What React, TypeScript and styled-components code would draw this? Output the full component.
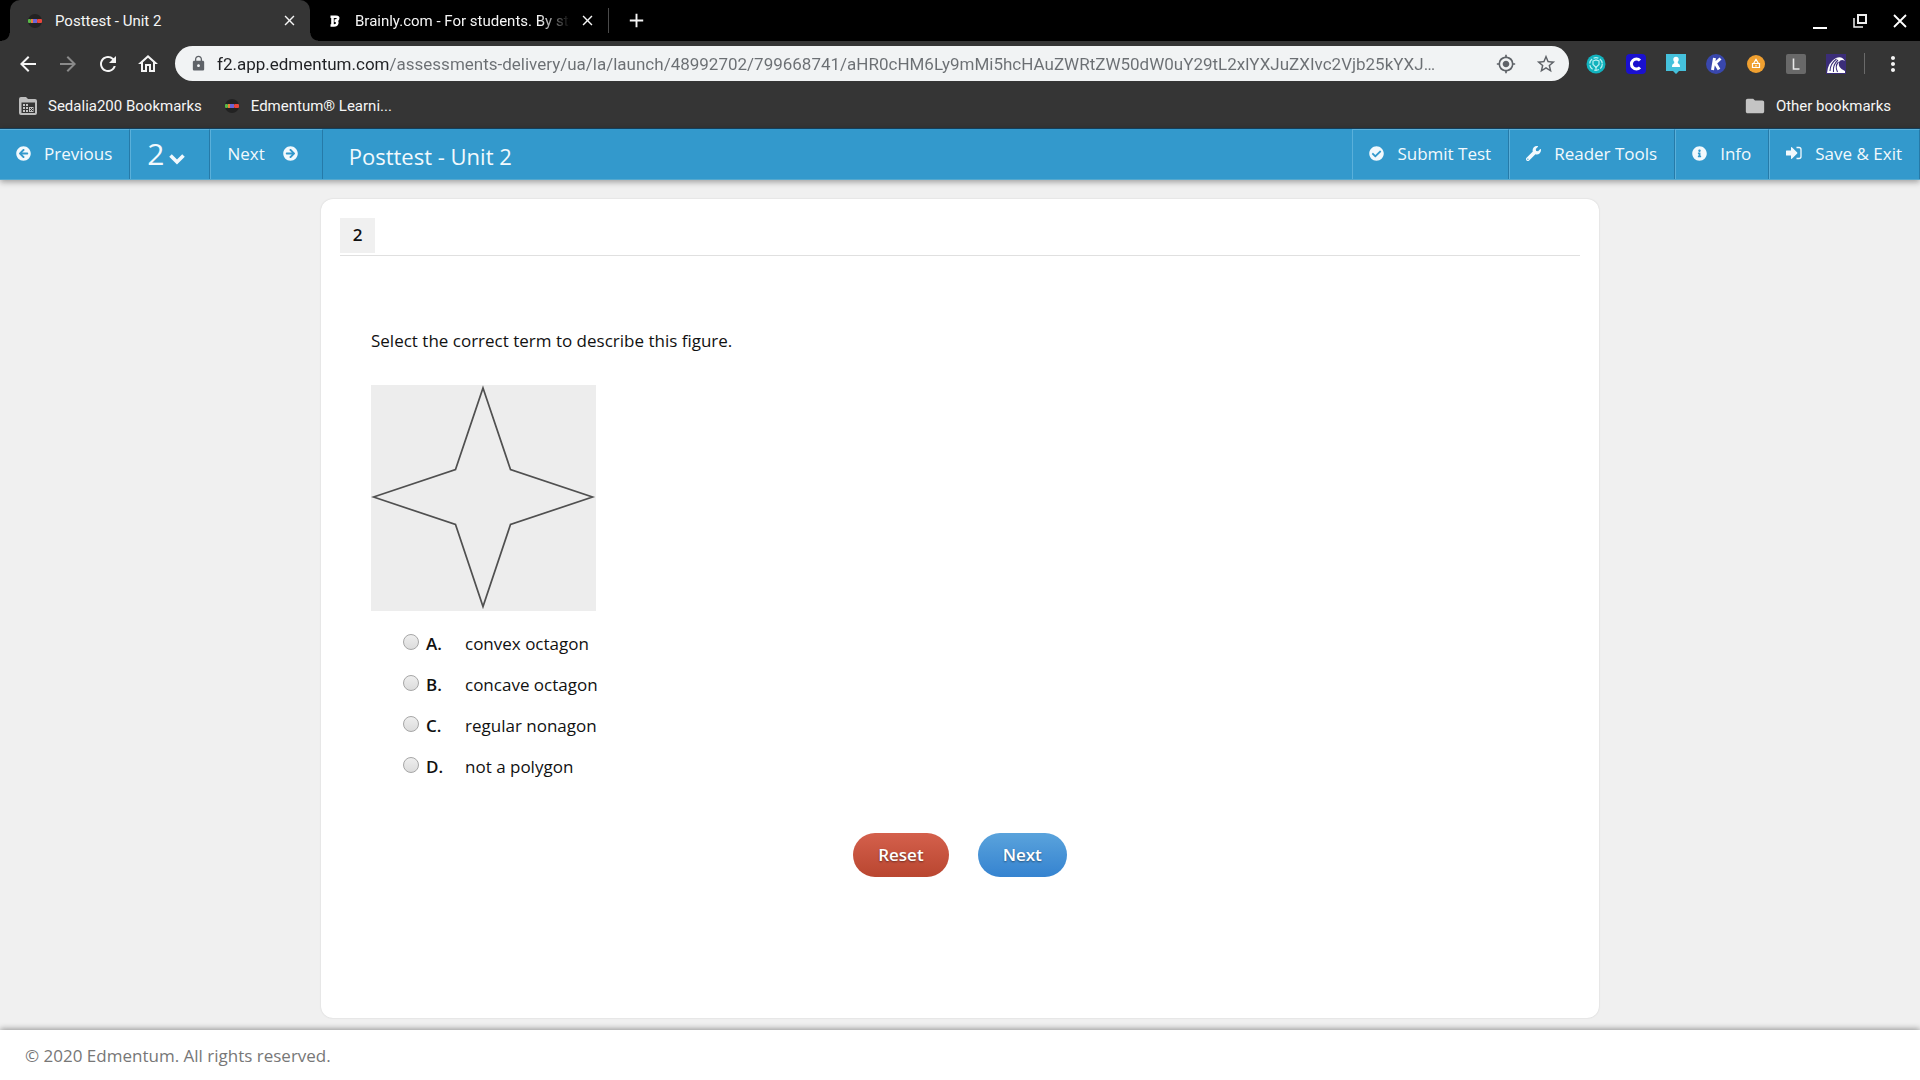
import React, { useState } from "react";
import styled, { createGlobalStyle, css } from "styled-components";
import {
  MdAdd,
  MdArrowBack,
  MdArrowForward,
  MdClose,
  MdFolder,
  MdLock,
  MdMoreVert,
  MdMyLocation,
  MdOutlineHome,
  MdRefresh,
  MdStarBorder,
} from "react-icons/md";
import {
  FaArrowCircleLeft,
  FaArrowCircleRight,
  FaCheckCircle,
  FaInfoCircle,
  FaWrench,
} from "react-icons/fa";

const GlobalStyle = createGlobalStyle`
  *, *::before, *::after { box-sizing: border-box; }
  body {
    margin: 0;
    background: #f0f0f0;
    font-family: "Open Sans", "Noto Sans", sans-serif;
    font-size: 17px;
    color: #111;
  }
  button, input { font: inherit; color: inherit; }
  svg { display: block; flex: none; }
`;

const Screen = styled.div`
  display: flex;
  flex-direction: column;
  min-height: 100vh;
`;

/* ---------- browser window ---------- */

const Chrome = styled.header`
  background: #353535;
  color: #f5f5f5;
  font-family: Roboto, "Liberation Sans", sans-serif;
  font-size: 15px;
`;

const TabStrip = styled.div`
  display: flex;
  height: 41px;
  padding-left: 10px;
  background: #000;
`;

const flare = css`
  content: "";
  position: absolute;
  bottom: 0;
  width: 8px;
  height: 8px;
`;

const Tab = styled.div<{ $active?: boolean }>`
  position: relative;
  display: flex;
  align-items: center;
  width: ${(p) => (p.$active ? 300 : 298)}px;
  padding: 0 12px 0 16px;
  border-radius: 10px 10px 0 0;
  background: ${(p) => (p.$active ? "#353535" : "transparent")};
  ${(p) =>
    p.$active &&
    css`
      &::before {
        ${flare}
        left: -8px;
        background: radial-gradient(circle at 0 0, #000 7px, #353535 8px);
      }
      &::after {
        ${flare}
        right: -8px;
        background: radial-gradient(circle at 100% 0, #000 7px, #353535 8px);
      }
    `}
`;

const TabTitle = styled.span<{ $fade?: boolean }>`
  flex: 1;
  min-width: 0;
  margin-left: 11px;
  overflow: hidden;
  white-space: nowrap;
  ${(p) => p.$fade && "mask-image: linear-gradient(90deg, #000 calc(100% - 30px), transparent);"}
`;

const TabClose = styled.button`
  display: grid;
  place-items: center;
  width: 18px;
  height: 18px;
  margin-left: 8px;
  padding: 0;
  border: 0;
  background: none;
`;

const TabDivider = styled.span`
  align-self: center;
  width: 1px;
  height: 25px;
  background: #4a4a4a;
`;

const IconButton = styled.button<{ $dim?: boolean }>`
  display: grid;
  place-items: center;
  width: 40px;
  height: 35px;
  padding: 0;
  border: 0;
  background: none;
  color: ${(p) => (p.$dim ? "#8a8a8a" : "inherit")};
`;

const NewTab = styled(IconButton)`
  height: 41px;
  margin-left: 7px;
`;

const WindowControls = styled.div`
  display: flex;
  align-items: center;
  margin-left: auto;
`;

const Toolbar = styled.div`
  display: flex;
  align-items: center;
  padding: 5px 7px 5px 8px;
`;

const Omnibox = styled.label`
  display: flex;
  flex: 1;
  align-items: center;
  min-width: 0;
  height: 35px;
  margin: 0 7px;
  padding: 0 3px 0 15px;
  border-radius: 18px;
  background: #f1f3f4;
  color: #5f6368;
`;

const Address = styled.input`
  flex: 1;
  min-width: 0;
  height: 35px;
  margin-left: 10px;
  padding: 0;
  border: 0;
  outline: 0;
  font-size: 17px;
  color: #5f6368;
  background: linear-gradient(90deg, #202124 173px, #6b6f73 173px);
  background-clip: text;
  -webkit-text-fill-color: transparent;
`;

const ToolbarDivider = styled.span`
  width: 1px;
  height: 21px;
  margin: 0 8px;
  background: #6a6a6a;
`;

const Bookmarks = styled.nav`
  display: flex;
  align-items: center;
  height: 42px;
  padding: 0 29px 2px 18px;
`;

const Bookmark = styled.a<{ $end?: boolean }>`
  display: flex;
  align-items: center;
  gap: 10px;
  margin-left: ${(p) => (p.$end ? "auto" : 0)};
  margin-right: ${(p) => (p.$end ? 0 : "21px")};
  color: inherit;
  text-decoration: none;
`;

/* ---------- assessment page ---------- */

const TopBar = styled.div`
  display: flex;
  height: 52px;
  border-top: 1px solid #123f5c;
  border-bottom: 1px solid #55a9cf;
  background: #3399cc;
  box-shadow: 0 2px 6px rgba(0, 0, 0, 0.35);
  color: #f2f9fd;
`;

const BarButton = styled.button`
  display: flex;
  align-items: center;
  gap: 13px;
  padding: 0 17px 3px 16px;
  border: 0;
  border-top: 1px solid #5ab0da;
  border-left: 1px solid #5ab0da;
  border-right: 1px solid #267aa8;
  background: none;
  white-space: nowrap;

  &:first-child {
    border-left: 0;
  }
`;

const NextBarButton = styled(BarButton)`
  gap: 18px;
  padding-right: 24px;
`;

const QuestionPicker = styled(BarButton)`
  gap: 5px;
  padding-right: 24px;
  font-size: 30px;

  svg {
    margin-top: 12px;
  }
`;

const BarTitle = styled.h1`
  flex: 1;
  margin: 0 26px;
  padding-top: 2px;
  font-size: 22px;
  font-weight: 400;
  line-height: 50px;
`;

const Card = styled.main`
  flex: 1;
  width: calc(100% - 40px);
  max-width: 1278px;
  margin: 19px auto 12px;
  padding: 19px;
  border-radius: 12px;
  background: #fff;
  box-shadow: 0 0 2px rgba(0, 0, 0, 0.14);
`;

const CardHeader = styled.div`
  padding-bottom: 2px;
  border-bottom: 1px solid #e0e0e0;
`;

const NumberBadge = styled.h2`
  width: 35px;
  margin: 0;
  padding-bottom: 2px;
  background: #f0f0f0;
  font-size: 17px;
  font-weight: 600;
  line-height: 33px;
  text-align: center;
`;

const Question = styled.fieldset`
  margin: 0;
  padding: 73px 31px 0;
  border: 0;
  line-height: 24px;
`;

const Prompt = styled.legend`
  float: left;
  width: 100%;
  padding: 0;
`;

const Figure = styled.svg`
  clear: both;
  padding-top: 32px;
  box-sizing: content-box;
`;

const Options = styled.div`
  padding: 12px 0 0 32px;
`;

const Option = styled.label`
  display: flex;
  align-items: center;
  width: max-content;
  height: 41px;
`;

const Radio = styled.input`
  appearance: none;
  width: 16px;
  height: 16px;
  margin: 0 7px 3px 0;
  border: 1px solid #a6a6a6;
  border-radius: 50%;
  background: linear-gradient(#eee, #dcdcdc);

  &:checked {
    background: radial-gradient(circle, #444 3px, #e6e6e6 4px);
  }
`;

const Letter = styled.span`
  width: 39px;
  font-weight: 600;
`;

const Actions = styled.div`
  display: flex;
  justify-content: center;
  gap: 29px;
  margin-top: 46px;
`;

const Pill = styled.button<{ $tone: "red" | "blue" }>`
  height: 44px;
  padding: 0 25px 2px;
  border: 0;
  border-radius: 22px;
  background: ${(p) =>
    p.$tone === "red" ? "linear-gradient(#d4604c, #b94630)" : "linear-gradient(#5aa3dc, #3583d0)"};
  color: #fff;
  font-weight: 600;
  text-shadow: 0 1px 2px rgba(0, 0, 0, 0.45);
`;

const Footer = styled.footer`
  padding: 14px 25px 12px;
  background: #fff;
  box-shadow: 0 -1px 6px rgba(0, 0, 0, 0.4);
  color: #777;
  line-height: 24px;
`;

/* ---------- drawings ---------- */

const EdmentumMark = () => (
  <svg width="18" height="18" viewBox="0 0 18 18">
    <circle cx="9" cy="9" r="7" fill="#222" />
    <rect x="2" y="7" width="3" height="4" rx="1" fill="#58b947" />
    <rect x="5" y="7" width="3" height="4" fill="#e8803a" />
    <rect x="7" y="7" width="4" height="4" fill="#6a63d8" />
    <rect x="11" y="7" width="5" height="4" rx="1" fill="#e8453c" />
  </svg>
);

const BrainlyMark = () => (
  <svg width="18" height="18" viewBox="0 0 18 18" fill="none" stroke="#fff" strokeWidth="2.6">
    <path d="M6.5 4v9.5M4.5 4.8h5.500q3 0 2 2.200-.6 1.700-3.500 1.700 3.500.2 2.700 2.800-.5 2-3.200 2H4.500" />
  </svg>
);

const ManagedFolder = () => (
  <svg width="20" height="18" viewBox="0 0 20 18">
    <path d="M3 0h5l2 2h7q2 0 2 2v12q0 2-2 2H3q-2 0-2-2V2q0-2 2-2z" fill="#bdbdbd" />
    <path d="M3.500 5.500h13.500v10.500H3.500z" fill="#353535" />
    <path d="M5 7h5v8H5zM11 10h4.500v5H11z" fill="#c4c4c4" />
    <path d="M7.500 7v8M5 9.500h5M5 12.500h5M12 11l3 3M15 11l-3 3" stroke="#353535" />
  </svg>
);

const ChevronIcon = () => (
  <svg width="16" height="12" viewBox="0 0 16 12" fill="none" stroke="currentColor" strokeWidth="3.600">
    <path d="M1.500 2.500L8 9L14.500 2.500" />
  </svg>
);

const MinimizeIcon = () => (
  <svg width="16" height="16" viewBox="0 0 16 16" stroke="#fff" strokeWidth="2">
    <path d="M1 15h14" />
  </svg>
);

const RestoreIcon = () => (
  <svg width="16" height="16" viewBox="0 0 16 16" fill="none" stroke="#eee">
    <path d="M6 2h8v8H6z" strokeWidth="2" />
    <path d="M2 5v9h9" strokeWidth="1.500" />
  </svg>
);

const CloseWindowIcon = () => (
  <svg width="16" height="16" viewBox="0 0 16 16" stroke="#fff" strokeWidth="1.800">
    <path d="M2 2l12 12M14 2L2 14" />
  </svg>
);

const SignInIcon = () => (
  <svg width="16" height="16" viewBox="0 0 16 16">
    <path d="M0.500 5.500h4.500V2.500q.1-.8.900-.3l5.300 5.200q.4.500 0 1L5.900 13.700q-.8.500-.9-.3v-3H.5q-.5 0-.5-.5V6q0-.5.500-.5z" fill="currentColor" />
    <path d="M10.500 2.500h2.500q2 0 2 2v7q0 2-2 2h-2.500" fill="none" stroke="currentColor" strokeWidth="1.300" />
  </svg>
);

const extensions: { name: string; art: React.ReactNode }[] = [
  {
    name: "Shield",
    art: (
      <>
        <circle cx="11" cy="11" r="9.500" fill="#12b3be" />
        <g fill="none" stroke="#b9f0f2" strokeWidth="1.200">
          <circle cx="11" cy="11" r="6.300" strokeDasharray="5 1.600" />
          <path d="M8 8l3-1 3 1v3.500l-3 3-3-3z" />
          <path d="M11 14v3" />
        </g>
      </>
    ),
  },
  {
    name: "Clever",
    art: (
      <>
        <rect x="1" y="1" width="20" height="20" rx="4" fill="#1a10cf" />
        <path d="M15 7.500a5 5 0 1 0 0 7" fill="none" stroke="#fff" strokeWidth="3" />
      </>
    ),
  },
  {
    name: "Classroom",
    art: (
      <>
        <path d="M1 1h20v17h-7l-3 3-3-3H1z" fill="#45c1dc" />
        <circle cx="11" cy="6.500" r="2.700" fill="#fff" />
        <path d="M9.500 8h3l.5 2.500q2 .3 2 3.500H7q0-3.200 2-3.500z" fill="#fff" />
      </>
    ),
  },
  {
    name: "Kami",
    art: (
      <>
        <circle cx="11" cy="11" r="10" fill="#3947ad" />
        <path d="M9.500 5L7.500 17M15.500 5.500L9 11.500M10.500 10.500l3.500 6" fill="none" stroke="#fff" strokeWidth="3" />
      </>
    ),
  },
  {
    name: "Lock",
    art: (
      <>
        <circle cx="11" cy="11" r="9" fill="#f0a030" />
        <path d="M7.500 10.500h7v4h-7zM8.500 10.500l2.500-4 2.500 4M11 12v1.500" fill="none" stroke="#fff" strokeWidth="1.200" />
      </>
    ),
  },
  {
    name: "Lightspeed",
    art: (
      <>
        <rect x="1" y="1" width="20" height="20" rx="2" fill="#696969" />
        <path d="M8.500 5.500v10.500h6" fill="none" stroke="#e8e8e8" strokeWidth="1.600" />
      </>
    ),
  },
  {
    name: "Wave",
    art: (
      <>
        <rect x="1" y="1" width="20" height="20" fill="#3b2d78" />
        <path d="M2 20Q3 9 11 5q6-2.500 9 3-4-2.500-6 1-1.500 6 6 9v2z" fill="#fff" />
        <path d="M5 18Q5 11 11.500 6M8.500 19Q7.500 12 13 7M12.500 19q-3-6 1-10" fill="none" stroke="#3b2d78" strokeWidth="1.100" />
      </>
    ),
  },
];

const answers = [
  ["A.", "convex octagon"],
  ["B.", "concave octagon"],
  ["C.", "regular nonagon"],
  ["D.", "not a polygon"],
];

const url =
  "f2.app.edmentum.com/assessments-delivery/ua/la/launch/48992702/799668741/aHR0cHM6Ly9mMi5hcHAuZWRtZW50dW0uY29tL2xlYXJuZXIvc2Vjb25kYXJ…";

export default function App() {
  const [choice, setChoice] = useState<string | null>(null);

  return (
    <Screen>
      <GlobalStyle />
      <Chrome>
        <TabStrip>
          <Tab $active>
            <EdmentumMark />
            <TabTitle>Posttest - Unit 2</TabTitle>
            <TabClose aria-label="Close tab">
              <MdClose size={17} />
            </TabClose>
          </Tab>
          <Tab>
            <BrainlyMark />
            <TabTitle $fade>Brainly.com - For students. By stu</TabTitle>
            <TabClose aria-label="Close tab">
              <MdClose size={17} />
            </TabClose>
          </Tab>
          <TabDivider />
          <NewTab aria-label="New tab">
            <MdAdd size={23} />
          </NewTab>
          <WindowControls>
            <IconButton aria-label="Minimize"><MinimizeIcon /></IconButton>
            <IconButton aria-label="Restore"><RestoreIcon /></IconButton>
            <IconButton aria-label="Close window"><CloseWindowIcon /></IconButton>
          </WindowControls>
        </TabStrip>

        <Toolbar>
          <IconButton aria-label="Back"><MdArrowBack size={24} /></IconButton>
          <IconButton aria-label="Forward" $dim><MdArrowForward size={24} /></IconButton>
          <IconButton aria-label="Reload"><MdRefresh size={24} /></IconButton>
          <IconButton aria-label="Home"><MdOutlineHome size={24} /></IconButton>
          <Omnibox>
            <MdLock size={17} />
            <Address aria-label="Address" defaultValue={url} />
            <IconButton aria-label="Location"><MdMyLocation size={20} /></IconButton>
            <IconButton aria-label="Bookmark this page"><MdStarBorder size={22} /></IconButton>
          </Omnibox>
          {extensions.map((e) => (
            <IconButton key={e.name} aria-label={e.name}>
              <svg width="22" height="22" viewBox="0 0 22 22">{e.art}</svg>
            </IconButton>
          ))}
          <ToolbarDivider />
          <IconButton aria-label="Menu"><MdMoreVert size={24} /></IconButton>
        </Toolbar>

        <Bookmarks>
          <Bookmark href="#">
            <ManagedFolder />
            Sedalia200 Bookmarks
          </Bookmark>
          <Bookmark href="#">
            <EdmentumMark />
            Edmentum® Learni...
          </Bookmark>
          <Bookmark href="#" $end>
            <MdFolder size={22} color="#c4c4c4" />
            Other bookmarks
          </Bookmark>
        </Bookmarks>
      </Chrome>

      <TopBar>
        <BarButton>
          <FaArrowCircleLeft size={15} />
          Previous
        </BarButton>
        <QuestionPicker aria-haspopup="listbox">
          2
          <ChevronIcon />
        </QuestionPicker>
        <NextBarButton>
          Next
          <FaArrowCircleRight size={15} />
        </NextBarButton>
        <BarTitle>Posttest - Unit 2</BarTitle>
        <BarButton>
          <FaCheckCircle size={15} />
          Submit Test
        </BarButton>
        <BarButton>
          <FaWrench size={15} />
          Reader Tools
        </BarButton>
        <BarButton>
          <FaInfoCircle size={15} />
          Info
        </BarButton>
        <BarButton>
          <SignInIcon />
          Save &amp; Exit
        </BarButton>
      </TopBar>

      <Card>
        <CardHeader>
          <NumberBadge>2</NumberBadge>
        </CardHeader>
        <Question>
          <Prompt>Select the correct term to describe this figure.</Prompt>
          <Figure width="225" height="226" viewBox="0 0 225 226" role="img" aria-label="Four-pointed star">
            <rect width="225" height="226" fill="#ededed" />
            <path
              d="M112 3L139.500 84.500L221.500 112L139.500 139.500L112 221.500L84.500 139.500L2.500 112L84.500 84.500Z"
              fill="none"
              stroke="#505050"
              strokeWidth="1.700"
            />
          </Figure>
          <Options>
            {answers.map(([letter, text]) => (
              <Option key={letter}>
                <Radio
                  type="radio"
                  name="answer"
                  checked={choice === letter}
                  onChange={() => setChoice(letter)}
                />
                <Letter>{letter}</Letter>
                {text}
              </Option>
            ))}
          </Options>
        </Question>
        <Actions>
          <Pill $tone="red" onClick={() => setChoice(null)}>Reset</Pill>
          <Pill $tone="blue">Next</Pill>
        </Actions>
      </Card>

      <Footer>© 2020 Edmentum. All rights reserved.</Footer>
    </Screen>
  );
}
